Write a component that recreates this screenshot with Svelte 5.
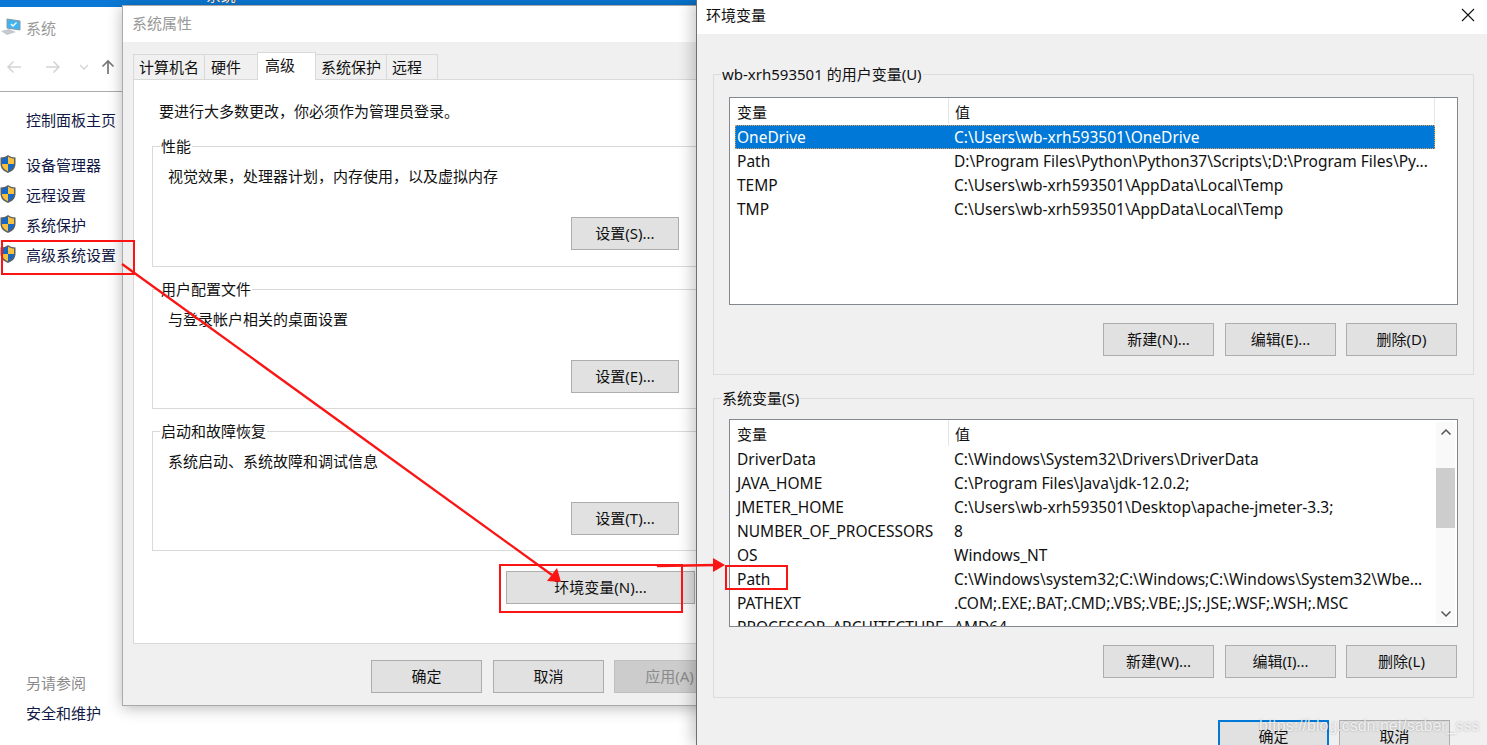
<script lang="ts">
    const comma = "\uFF0C";
    const sideLinks = ["设备管理器", "远程设置", "系统保护", "高级系统设置"];
    const tabs = ["计算机名", "硬件", "高级", "系统保护", "远程"];
    const notice = `要进行大多数更改${comma}你必须作为管理员登录。`;
    const groups = [
        { title: "性能", desc: `视觉效果${comma}处理器计划${comma}内存使用${comma}以及虚拟内存`, btn: "设置(S)..." },
        { title: "用户配置文件", desc: "与登录帐户相关的桌面设置", btn: "设置(E)..." },
        { title: "启动和故障恢复", desc: "系统启动、系统故障和调试信息", btn: "设置(T)..." }
    ];
    const userVars = [
        ["OneDrive", "C:\\Users\\wb-xrh593501\\OneDrive"],
        ["Path", "D:\\Program Files\\Python\\Python37\\Scripts\\;D:\\Program Files\\Py..."],
        ["TEMP", "C:\\Users\\wb-xrh593501\\AppData\\Local\\Temp"],
        ["TMP", "C:\\Users\\wb-xrh593501\\AppData\\Local\\Temp"]
    ];
    const sysVars = [
        ["DriverData", "C:\\Windows\\System32\\Drivers\\DriverData"],
        ["JAVA_HOME", "C:\\Program Files\\Java\\jdk-12.0.2;"],
        ["JMETER_HOME", "C:\\Users\\wb-xrh593501\\Desktop\\apache-jmeter-3.3;"],
        ["NUMBER_OF_PROCESSORS", "8"],
        ["OS", "Windows_NT"],
        ["Path", "C:\\Windows\\system32;C:\\Windows;C:\\Windows\\System32\\Wbe..."],
        ["PATHEXT", ".COM;.EXE;.BAT;.CMD;.VBS;.VBE;.JS;.JSE;.WSF;.WSH;.MSC"],
        ["PROCESSOR_ARCHITECTURE", "AMD64"]
    ];
</script>

{#snippet shield()}
    <svg class="shield" viewBox="0 0 18 20" width="18" height="20">
        <path d="M9 1 C6.500 2.800 4 3.500 1.500 3.500 L1.500 10 C1.500 14.500 5 17.500 9 19 C13 17.500 16.500 14.500 16.500 10 L16.500 3.500 C14 3.500 11.500 2.800 9 1 Z" fill="#5b5f66" />
        <path d="M9 2.500 C7 3.900 5 4.500 3 4.600 L3 10 L9 10 Z" fill="#1668c4" />
        <path d="M9 2.500 C11 3.900 13 4.500 15 4.600 L15 10 L9 10 Z" fill="#f8c13c" />
        <path d="M3 10 C3 13.600 5.800 16 9 17.300 L9 10 Z" fill="#f8c13c" />
        <path d="M15 10 C15 13.600 12.200 16 9 17.300 L9 10 Z" fill="#1668c4" />
    </svg>
{/snippet}

{#snippet varList(rows, scroll, selected)}
    <div class="list">
        <div class="list-head">
            <span class="col-name">变量</span>
            <span class="col-val">值</span>
        </div>
        {#each rows as row, i}
            <div class="row" class:selected={selected && i === 0}>
                <span class="col-name">{row[0]}</span>
                <span class="col-val">{row[1]}</span>
            </div>
        {/each}
        {#if scroll}
            <div class="scrollbar">
                <svg viewBox="0 0 12 8" width="12" height="8"><path d="M1.500 6.500 L6 2 L10.500 6.500" fill="none" stroke="#555" stroke-width="1.500" /></svg>
                <div class="thumb"></div>
                <svg viewBox="0 0 12 8" width="12" height="8"><path d="M1.500 1.500 L6 6 L10.500 1.500" fill="none" stroke="#555" stroke-width="1.500" /></svg>
            </div>
        {:else}
            <div class="noscroll-cap"></div>
        {/if}
    </div>
{/snippet}

<div class="desktop">
    <div class="topstrip"><span>系统</span></div>

    <!-- control panel window behind the dialogs -->
    <div class="syswin">
        <div class="sys-title">
            <svg viewBox="0 0 20 18" width="20" height="18">
                <path d="M6 1 L19 3 L19 12 L6 10 Z" fill="#3fb4ee" stroke="#8a97a3" />
                <path d="M10 6 L12 8 L15.500 4.500" fill="none" stroke="#fff" stroke-width="1.300" />
                <path d="M0 13 L8 11 L15 14 L6 17 Z" fill="#c3c9cf" />
            </svg>
            <span>系统</span>
        </div>
        <div class="sys-nav">
            <svg viewBox="0 0 16 14" width="16" height="14"><path d="M15 7 H2 M7.500 1.500 L2 7 L7.500 12.500" fill="none" stroke="#d4d4d4" stroke-width="1.500" /></svg>
            <svg viewBox="0 0 16 14" width="16" height="14"><path d="M1 7 H14 M8.500 1.500 L14 7 L8.500 12.500" fill="none" stroke="#d4d4d4" stroke-width="1.500" /></svg>
            <svg viewBox="0 0 10 6" width="10" height="6"><path d="M1 1 L5 5 L9 1" fill="none" stroke="#d4d4d4" stroke-width="1.300" /></svg>
            <svg viewBox="0 0 14 16" width="14" height="16"><path d="M7 15 V2 M1.500 7.500 L7 2 L12.500 7.500" fill="none" stroke="#777" stroke-width="1.700" /></svg>
        </div>
        <div class="sys-side">
            <div class="home">控制面板主页</div>
            {#each sideLinks as link}
                <div class="side-link">{@render shield()}<span>{link}</span></div>
            {/each}
            <div class="see-also">
                <div class="muted">另请参阅</div>
                <div class="side-plain">安全和维护</div>
            </div>
        </div>
    </div>

    <!-- 系统属性 -->
    <div class="dialog props">
        <div class="titlebar muted-title">系统属性</div>
        <div class="props-body">
            <div class="tabs">
                {#each tabs as tab, i}
                    <div class="tab" class:active={i === 2}>{tab}</div>
                {/each}
            </div>
            <div class="panel">
                <p class="notice">{notice}</p>
                {#each groups as g}
                    <fieldset class="pgroup">
                        <legend>{g.title}</legend>
                        <div class="pdesc">{g.desc}</div>
                        <button class="btn setting">{g.btn}</button>
                    </fieldset>
                {/each}
                <div class="env-row"><button class="btn env">环境变量(N)...</button></div>
            </div>
            <div class="footer">
                <button class="btn">确定</button>
                <button class="btn">取消</button>
                <button class="btn disabled">应用(A)</button>
            </div>
        </div>
    </div>

    <!-- 环境变量 -->
    <div class="dialog envwin">
        <div class="titlebar env-title">
            <span>环境变量</span>
            <svg viewBox="0 0 14 14" width="14" height="14"><path d="M1 1 L13 13 M13 1 L1 13" stroke="#111" stroke-width="1.100" /></svg>
        </div>
        <div class="env-body">
            <fieldset class="vgroup first">
                <legend>wb-xrh593501 的用户变量(U)</legend>
                {@render varList(userVars, false, true)}
                <div class="actions">
                    <button class="btn">新建(N)...</button>
                    <button class="btn">编辑(E)...</button>
                    <button class="btn">删除(D)</button>
                </div>
            </fieldset>
            <fieldset class="vgroup second">
                <legend>系统变量(S)</legend>
                {@render varList(sysVars, true, false)}
                <div class="actions">
                    <button class="btn">新建(W)...</button>
                    <button class="btn">编辑(I)...</button>
                    <button class="btn">删除(L)</button>
                </div>
            </fieldset>
            <div class="env-footer">
                <button class="btn primary">确定</button>
                <button class="btn">取消</button>
            </div>
        </div>
    </div>

    <!-- red annotations drawn on top of the screenshot -->
    <svg class="marks" viewBox="0 0 1487 745" width="1487" height="745">
        <g fill="none" stroke="#fb1414" stroke-width="2">
            <rect x="2" y="241" width="132" height="33" />
            <rect x="500" y="565" width="182" height="47" />
            <rect x="726" y="566" width="61" height="23" />
            <path d="M122 264 L552 575" stroke-width="2.300" />
            <path d="M657 566 L716 565" stroke-width="2.300" />
        </g>
        <path d="M561 582 L547 581 L557 568 Z" fill="#fb1414" />
        <path d="M713 558 L725 565 L713 572 Z" fill="#fb1414" />
    </svg>

    <div class="watermark">https://blog.csdn.net/saber_sss</div>
</div>

<style>
    :global(body) {
        margin: 0;
        overflow: hidden;
    }

    .desktop {
        position: relative;
        width: 1487px;
        height: 745px;
        overflow: hidden;
        background: #fff;
        font-family: "Noto Sans", "Noto Sans CJK SC", sans-serif;
        font-size: 15px;
        color: #111;
    }

    .topstrip {
        height: 7px;
        overflow: hidden;
        padding-left: 206px;
        background: #0a78d4;
    }

    .topstrip span {
        display: block;
        margin-top: -14px;
        line-height: 18px;
        color: #fff;
        text-shadow: 1px 0 0 #333;
    }

    .syswin {
        width: 122px;
        background: #fff;
    }

    .sys-title {
        display: flex;
        align-items: center;
        gap: 5px;
        height: 40px;
        padding-left: 1px;
        color: #999;
    }

    .sys-nav {
        box-sizing: border-box;
        display: flex;
        align-items: center;
        gap: 23px;
        height: 45px;
        padding: 0 0 5px 6px;
        border-bottom: 1px solid #aaa;
        width: 122px;
    }

    .sys-nav svg:nth-child(3) {
        margin: 0 -11px 0 -5px;
    }

    .sys-side {
        padding-top: 13px;
    }

    .home {
        padding-left: 26px;
        height: 30px;
        line-height: 30px;
        color: #111845;
        margin-bottom: 14px;
    }

    .side-link {
        display: flex;
        align-items: center;
        gap: 9px;
        height: 30px;
        color: #111845;
        white-space: nowrap;
    }

    .shield {
        flex: none;
        margin-left: -1px;
    }

    .see-also {
        margin-top: 399px;
    }

    .muted {
        padding-left: 26px;
        height: 30px;
        line-height: 30px;
        color: #8b8b8b;
    }

    .side-plain {
        padding-left: 26px;
        height: 30px;
        line-height: 30px;
        color: #111845;
    }

    .dialog {
        position: absolute;
        box-sizing: border-box;
        display: flex;
        flex-direction: column;
        background: #f0f0f0;
    }

    .props {
        left: 122px;
        top: 5px;
        width: 626px;
        height: 701px;
        border: 1px solid #aaa;
        box-shadow: 0 2px 14px rgba(0, 0, 0, 0.28);
    }

    .titlebar {
        background: #fff;
        flex: none;
    }

    .muted-title {
        height: 36px;
        line-height: 34px;
        padding-left: 9px;
        color: #999;
    }

    .props-body {
        flex: 1;
        display: flex;
        flex-direction: column;
        padding: 11px 10px 0 10px;
    }

    .tabs {
        display: flex;
        height: 26px;
        align-items: flex-end;
        position: relative;
        z-index: 1;
        padding-left: 1px;
    }

    .tab {
        box-sizing: border-box;
        height: 25px;
        line-height: 24px;
        padding-left: 5px;
        background: #f0f0f0;
        border: 1px solid #d9d9d9;
        border-bottom: none;
        margin-left: -1px;
        white-space: nowrap;
    }

    .tab:nth-child(1),
    .tab:nth-child(4) {
        width: 72px;
    }

    .tab:nth-child(2) {
        width: 54px;
        padding-left: 6px;
    }

    .tab:nth-child(5) {
        width: 52px;
    }

    .tab.active {
        width: 59px;
        height: 28px;
        line-height: 25px;
        padding-left: 7px;
        background: #fff;
        margin-bottom: -1px;
    }

    .panel {
        box-sizing: border-box;
        height: 565px;
        background: #fff;
        border: 1px solid #d9d9d9;
        padding: 0 18px 0 18px;
    }

    .notice {
        margin: 20px 0 14px 7px;
        line-height: 22px;
    }

    .pgroup {
        box-sizing: border-box;
        height: 131px;
        margin: 0 0 12px;
        padding: 0;
        border: 1px solid #d9d9d9;
    }

    .pgroup:nth-of-type(n + 2) {
        height: 130px;
    }

    .pgroup legend {
        padding: 0 1px;
        margin-left: 7px;
        line-height: 20px;
    }

    .vgroup legend {
        padding: 0 1px;
        margin-left: -8px;
        line-height: 20px;
    }

    .pdesc {
        margin: 9px 0 0 15px;
        line-height: 22px;
    }

    .btn {
        box-sizing: border-box;
        width: 111px;
        height: 33px;
        padding: 0 0 2px;
        background: #e1e1e1;
        border: 1px solid #adadad;
        font: inherit;
        color: #111;
        white-space: nowrap;
    }

    .setting {
        display: block;
        width: 108px;
        margin: 30px 0 0 418px;
    }

    .env-row {
        margin: 20px 0 0 354px;
    }

    .env {
        width: 189px;
    }

    .footer {
        display: flex;
        gap: 11px;
        padding: 16px 0 0 238px;
    }

    .disabled {
        margin-left: -1px;
        background: #cccccc;
        border-color: #bfbfbf;
        color: #8a8a8a;
    }

    .envwin {
        left: 696px;
        top: 0;
        width: 791px;
        height: 745px;
        overflow: hidden;
        border-left: 1px solid #6f6f6f;
        box-shadow: -4px 0 14px rgba(0, 0, 0, 0.22);
    }

    .env-title {
        box-sizing: border-box;
        display: flex;
        justify-content: space-between;
        align-items: center;
        height: 34px;
        padding: 0 12px 5px 9px;
    }

    .env-body {
        padding: 30px 13px 0 16px;
    }

    .vgroup {
        box-sizing: border-box;
        height: 311px;
        margin: 0 0 13px;
        padding: 13px 15px 0 15px;
        border: 1px solid #dcdcdc;
    }

    .vgroup.second {
        height: 310px;
        padding-top: 11px;
    }

    .list {
        position: relative;
        box-sizing: border-box;
        height: 208px;
        overflow: hidden;
        background: #fff;
        border: 1px solid #828790;
    }

    .list-head,
    .row {
        display: flex;
        height: 24px;
        line-height: 24px;
        white-space: nowrap;
        font-size: 15.5px;
    }

    .list-head {
        height: 27px;
        line-height: 28px;
        font-size: 15px;
    }

    .col-name {
        box-sizing: border-box;
        flex: none;
        width: 218px;
        padding-left: 7px;
    }

    .col-val {
        padding-left: 6px;
    }

    .list-head .col-val {
        border-left: 1px solid #e5e5e5;
        height: 26px;
    }

    .row.selected {
        box-sizing: border-box;
        background: #0078d7;
        color: #fff;
        width: 700px;
        margin-left: 5px;
        outline: 1px dotted #e8a050;
        outline-offset: -1px;
    }

    .row.selected .col-name {
        width: 213px;
        padding-left: 2px;
    }

    .noscroll-cap {
        position: absolute;
        top: 0;
        right: 22px;
        width: 1px;
        height: 26px;
        background: #e5e5e5;
    }

    .scrollbar {
        position: absolute;
        top: 2px;
        right: 2px;
        bottom: 2px;
        width: 19px;
        display: flex;
        flex-direction: column;
        align-items: center;
        justify-content: space-between;
        background: #f9f9f9;
        padding: 6px 0;
        box-sizing: border-box;
    }

    .thumb {
        position: absolute;
        top: 46px;
        left: 0;
        right: 0;
        height: 60px;
        background: #cdcdcd;
    }

    .actions {
        display: flex;
        gap: 11px;
        justify-content: flex-end;
        margin-top: 18px;
        padding-right: 1px;
    }

    .actions .btn:last-child {
        margin-left: -1px;
    }

    .env-footer {
        display: flex;
        gap: 10px;
        padding-left: 505px;
        margin-top: 22px;
    }

    .primary {
        border: 2px solid #0078d7;
    }

    .marks {
        position: absolute;
        left: 0;
        top: 0;
        pointer-events: none;
    }

    .watermark {
        position: absolute;
        left: 1259px;
        top: 717px;
        font-family: "Liberation Sans", sans-serif;
        font-size: 16px;
        line-height: 18px;
        color: rgba(255, 255, 255, 0.8);
        text-shadow: 0 0 2px rgba(0, 0, 0, 0.3);
        white-space: nowrap;
    }
</style>
